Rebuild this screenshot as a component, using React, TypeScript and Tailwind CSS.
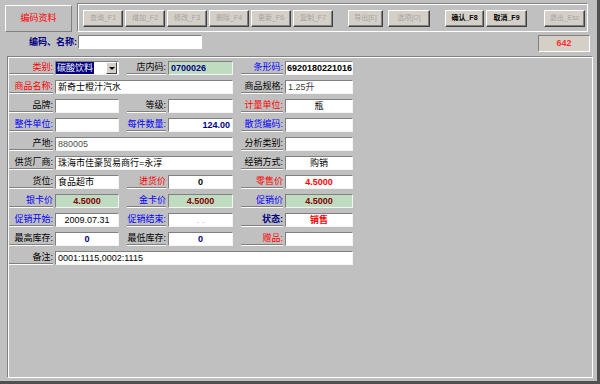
import React from "react";

type Tone = "black" | "red" | "blue" | "navy";

const toneCls: Record<Tone, string> = {
  black: "text-black",
  red: "text-[#ff0000]",
  blue: "text-[#0000ff]",
  navy: "text-[#000080] font-bold",
};

const Label = ({ text, w, tone = "black", gap = false }: { text: string; w: string; tone?: Tone; gap?: boolean }) => (
  <div
    className={`${w} ${gap ? "ml-[8px]" : ""} h-[13px] shrink-0 whitespace-nowrap border-b border-[#808080] text-right text-[9px] leading-[13px] shadow-[0_1px_0_#ffffff] ${toneCls[tone]}`}
  >
    {text}
  </div>
);

interface IField {
  w: string;
  green?: boolean;
  align?: "left" | "center" | "right";
  cls?: string;
  children?: React.ReactNode;
}

const Field = ({ w, green, align = "left", cls = "", children }: IField) => (
  <div
    className={`${w} ml-[2px] h-[14px] shrink-0 overflow-hidden whitespace-nowrap border border-t-[#808080] border-l-[#808080] border-b-[#f4f4f4] border-r-[#f4f4f4] px-[2px] text-[9px] leading-[12px] ${
      green ? "bg-[#c0dcc0]" : "bg-white"
    } ${align === "center" ? "text-center" : align === "right" ? "text-right" : "text-left"} ${cls}`}
  >
    {children}
  </div>
);

const Btn = ({ text, w, on = false, ml = "" }: { text: string; w: string; on?: boolean; ml?: string }) => (
  <div
    className={`${w} ${ml} flex h-[17px] shrink-0 items-center justify-center border border-t-white border-l-white border-b-[#404040] border-r-[#404040] bg-[#d4d0c8] text-[7px] shadow-[inset_-1px_-1px_0_#808080] ${
      on ? "font-bold text-black" : "text-[#a4a4a4]"
    }`}
  >
    {text}
  </div>
);

const Row = ({ children }: { children: React.ReactNode }) => (
  <div className="flex h-[19px] items-start pl-[1px]">{children}</div>
);

const App = () => {
  return (
    <div className="h-[384px] w-[600px] overflow-hidden border-b-[3px] border-r-[3px] border-[#505050] bg-[#c0c0c0] font-['Liberation_Sans','Noto_Sans_CJK_SC',sans-serif]">
      {/* top bar */}
      <div className="flex items-start pl-[5px] pt-[3px]">
        <div className="mt-[2px] flex h-[27px] w-[67px] items-center justify-center border border-t-white border-l-white border-b-[#808080] border-r-[#808080] text-[9px] text-[#ff0000]">
          编码资料
        </div>
        <div className="ml-[5px] flex h-[29px] w-[511px] items-start border border-t-[#808080] border-l-[#808080] border-b-white border-r-white pl-[5px] pt-[6px] shadow-[inset_1px_1px_0_#ffffff]">
          <Btn text="查询_F1" w="w-[40px]" />
          <Btn text="增加_F2" w="w-[40px]" ml="ml-[2px]" />
          <Btn text="修改_F3" w="w-[40px]" ml="ml-[2px]" />
          <Btn text="删除_F4" w="w-[40px]" ml="ml-[2px]" />
          <Btn text="更新_F6" w="w-[40px]" ml="ml-[2px]" />
          <Btn text="复制_F7" w="w-[40px]" ml="ml-[2px]" />
          <Btn text="导出[E]" w="w-[35px]" ml="ml-[15px]" />
          <Btn text="选项[O]" w="w-[42px]" ml="ml-[5px]" />
          <Btn text="确认_F8" w="w-[39px]" ml="ml-[15px]" on />
          <Btn text="取消_F9" w="w-[41px]" ml="ml-[2px]" on />
          <Btn text="退出_Esc" w="w-[41px]" ml="ml-[17px]" />
        </div>
      </div>

      {/* search row */}
      <div className="mt-[3px] flex h-[17px] items-start">
        <div className="ml-[5px] w-[72px] text-right text-[9px] font-bold leading-[14px] text-[#000080]">编码、名称:</div>
        <div className="ml-[1px] h-[14px] w-[124px] border border-t-[#808080] border-l-[#808080] border-b-white border-r-white bg-white" />
        <div className="flex-1" />
        <div className="mr-[7px] flex h-[17px] w-[52px] items-center justify-center border border-t-[#808080] border-l-[#808080] border-b-white border-r-white bg-[#d4d0c8] text-[9px] font-bold text-[#ff3030]">
          642
        </div>
      </div>

      {/* form frame */}
      <div className="ml-[7px] mt-[4px] h-[322px] w-[586px] border border-t-[#808080] border-l-[#808080] border-b-white border-r-white pt-[4px] shadow-[inset_1px_1px_0_#ffffff]">
        <Row>
          <Label text="类别:" w="w-[44px]" tone="red" />
          <div className="ml-[2px] flex h-[14px] w-[64px] shrink-0 items-start justify-between border border-t-[#808080] border-l-[#808080] border-b-[#f4f4f4] border-r-[#f4f4f4] bg-white">
            <div className="h-[12px] whitespace-nowrap bg-[#000080] px-[1px] text-[9px] leading-[12px] text-white">碳酸饮料</div>
            <div className="mr-[1px] flex h-[12px] w-[11px] items-center justify-center border border-t-white border-l-white border-b-[#404040] border-r-[#404040] bg-[#d4d0c8]">
              <div className="h-0 w-0 border-l-[3px] border-r-[3px] border-t-[3px] border-l-transparent border-r-transparent border-t-black" />
            </div>
          </div>
          <Label text="店内码:" w="w-[39px]" gap />
          <Field w="w-[65px]" green cls="font-bold text-[#000080]">0700026</Field>
          <Label text="条形码:" w="w-[42px]" tone="blue" gap />
          <Field w="w-[68px]" cls="!px-[1px] font-bold text-[8.5px] text-black">6920180221016</Field>
        </Row>
        <Row>
          <Label text="商品名称:" w="w-[44px]" tone="red" />
          <Field w="w-[178px]" cls="text-black">新奇士橙汁汽水</Field>
          <Label text="商品规格:" w="w-[42px]" gap />
          <Field w="w-[68px]" cls="text-[#404040]">1.25升</Field>
        </Row>
        <Row>
          <Label text="品牌:" w="w-[44px]" />
          <Field w="w-[64px]" />
          <Label text="等级:" w="w-[39px]" gap />
          <Field w="w-[65px]" />
          <Label text="计量单位:" w="w-[42px]" tone="red" gap />
          <Field w="w-[68px]" align="center" cls="text-black">瓶</Field>
        </Row>
        <Row>
          <Label text="整件单位:" w="w-[44px]" tone="blue" />
          <Field w="w-[64px]" />
          <Label text="每件数量:" w="w-[39px]" tone="blue" gap />
          <Field w="w-[65px]" align="right" cls="font-bold text-[#000080]">124.00</Field>
          <Label text="散货编码:" w="w-[42px]" tone="blue" gap />
          <Field w="w-[68px]" />
        </Row>
        <Row>
          <Label text="产地:" w="w-[44px]" />
          <Field w="w-[178px]" cls="text-[#505050]">880005</Field>
          <Label text="分析类别:" w="w-[42px]" gap />
          <Field w="w-[68px]" />
        </Row>
        <Row>
          <Label text="供货厂商:" w="w-[44px]" />
          <Field w="w-[178px]" cls="text-black">珠海市佳豪贸易商行=永淳</Field>
          <Label text="经销方式:" w="w-[42px]" gap />
          <Field w="w-[68px]" align="center" cls="text-black">购销</Field>
        </Row>
        <Row>
          <Label text="货位:" w="w-[44px]" />
          <Field w="w-[64px]" cls="text-black">食品超市</Field>
          <Label text="进货价" w="w-[39px]" tone="red" gap />
          <Field w="w-[65px]" align="center" cls="font-bold text-black">0</Field>
          <Label text="零售价" w="w-[42px]" tone="red" gap />
          <Field w="w-[68px]" align="center" cls="font-bold text-[#ff0000]">4.5000</Field>
        </Row>
        <Row>
          <Label text="银卡价" w="w-[44px]" tone="blue" />
          <Field w="w-[64px]" green align="center" cls="font-bold text-[#800000]">4.5000</Field>
          <Label text="金卡价" w="w-[39px]" tone="blue" gap />
          <Field w="w-[65px]" green align="center" cls="font-bold text-[#800000]">4.5000</Field>
          <Label text="促销价" w="w-[42px]" tone="blue" gap />
          <Field w="w-[68px]" green align="center" cls="font-bold text-[#800000]">4.5000</Field>
        </Row>
        <Row>
          <Label text="促销开始:" w="w-[44px]" tone="blue" />
          <Field w="w-[64px]" align="center" cls="text-black">2009.07.31</Field>
          <Label text="促销结束:" w="w-[39px]" tone="blue" gap />
          <Field w="w-[65px]" align="center" cls="text-[#a0a0a0]">.   .</Field>
          <Label text="状态:" w="w-[42px]" tone="navy" gap />
          <Field w="w-[68px]" align="center" cls="font-bold text-[#ff0000]">销售</Field>
        </Row>
        <Row>
          <Label text="最高库存:" w="w-[44px]" />
          <Field w="w-[64px]" align="center" cls="font-bold text-[#000080]">0</Field>
          <Label text="最低库存:" w="w-[39px]" gap />
          <Field w="w-[65px]" align="center" cls="font-bold text-[#000080]">0</Field>
          <Label text="赠品:" w="w-[42px]" tone="red" gap />
          <Field w="w-[68px]" />
        </Row>
        <Row>
          <Label text="备注:" w="w-[44px]" />
          <Field w="w-[298px]" cls="text-black">0001:1115,0002:1115</Field>
        </Row>
      </div>
    </div>
  );
};

export default App;
